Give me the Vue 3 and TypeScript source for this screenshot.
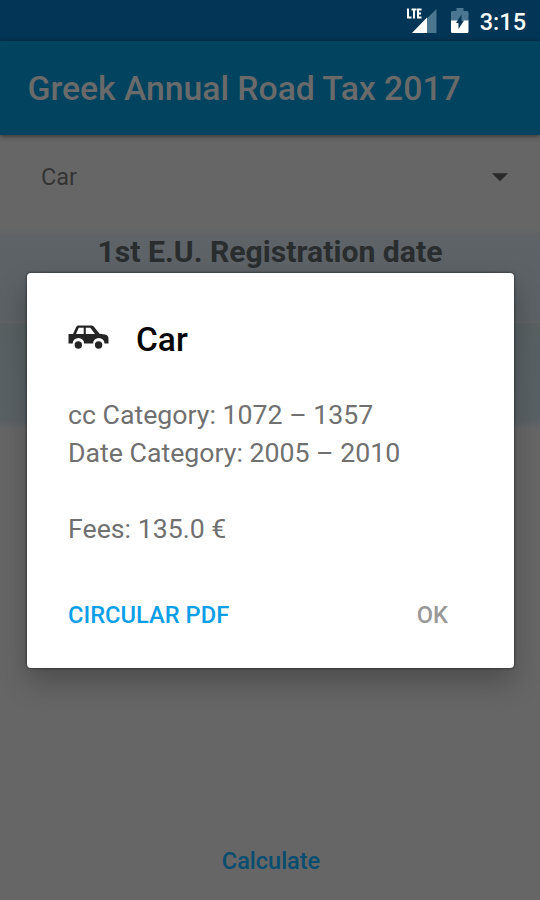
<script setup lang="ts">
interface TaxResult {
  vehicle: string
  ccRange: string
  dateRange: string
  fees: string
}

const result: TaxResult = {
  vehicle: 'Car',
  ccRange: '1072 – 1357',
  dateRange: '2005 – 2010',
  fees: '135.0 €',
}
</script>

<template>
  <div class="screen">
    <header class="status-bar">
      <svg class="signal" viewBox="0 0 32 26" width="32" height="26">
        <path d="M30.500 1V25H6Z" fill="#4b7790" />
        <path d="M21 9.500V25H6Z" fill="#fff" />
        <path d="M2 .5v9h3.500M5.500 1.500h5M8 1.500v9M15.500 1.500h-3.500v8h3.500M12 5.500h3" fill="none" stroke="#fff" stroke-width="2" />
      </svg>
      <svg class="battery" viewBox="0 0 18 26" width="18" height="26">
        <path d="M5.500 0h7v3H16q1.500 0 1.500 1.500V13H0V4.500Q0 3 1.500 3h4z" fill="#4b7790" />
        <path d="M0 12.500h17.500V23.500q0 1.500-1.500 1.500H1.500Q0 25 0 23.500z" fill="#fff" />
        <path d="M10.500 6.500v6H13L7.500 21v-6H5z" fill="#043555" />
      </svg>
      <span class="clock">3:15</span>
    </header>

    <div class="toolbar"><h1>Greek Annual Road Tax 2017</h1></div>

    <main class="content">
      <div class="spinner">
        <span>{{ result.vehicle }}</span>
        <svg viewBox="0 0 16 9" width="16" height="9"><path d="M0 .3h16L8 8.300z" fill="#292929" /></svg>
      </div>
      <section class="registration"><h2>1st E.U. Registration date</h2><div class="rule"></div></section>
      <button class="calculate" type="button">Calculate</button>
    </main>

    <div class="dialog" role="dialog">
      <div class="dialog-title">
        <svg viewBox="0 0 41 25" width="41" height="25">
          <path fill="#252525" fill-rule="evenodd" d="M10.500 .5H23.500q1.500 0 2.500 1.200L31.500 8.800l5.500 .8q3.500 .7 3.500 4.200v4.800h-4a5.700 5.700 0 0 0-11.400 0h-9a5.700 5.700 0 0 0-11.400 0H.5V9h4.500L8.300 1.800Q9 .5 10.500 .5zM10.800 2.800 8 9h7.700V2.800zM17.800 2.800V9h9.200L22.300 2.800z" />
          <circle cx="10.300" cy="20" r="3.700" fill="#252525" />
          <circle cx="30.600" cy="20" r="3.700" fill="#252525" />
        </svg>
        <h2>{{ result.vehicle }}</h2>
      </div>
      <div class="details">
        <p class="cc">cc Category: {{ result.ccRange }}</p>
        <p class="date">Date Category: {{ result.dateRange }}</p>
        <p class="fees">Fees: {{ result.fees }}</p>
      </div>
      <div class="actions">
        <button class="pdf" type="button">CIRCULAR PDF</button>
        <button class="ok" type="button">OK</button>
      </div>
    </div>
  </div>
</template>

<style>
body { margin: 0; }
</style>

<style scoped>
* { box-sizing: border-box; }
h1, h2, p { margin: 0; }
button { border: 0; padding: 0; background: none; font: inherit; }
.screen {
  position: relative;
  display: flex;
  flex-direction: column;
  width: 540px;
  height: 900px;
  overflow: hidden;
  background: #666;
  font-family: Roboto, "Liberation Sans", sans-serif;
}
.status-bar {
  display: flex;
  align-items: center;
  justify-content: flex-end;
  height: 41px;
  padding: 1px 14px 0 0;
  background: #033556;
}
.signal { margin-right: 13px; }
.battery { margin-right: 11px; }
.clock { padding-top: 1px; color: #fff; font-size: 23.500px; font-weight: 500; line-height: 40px; }
.toolbar {
  display: flex;
  align-items: center;
  height: 94px;
  padding: 1px 0 0 27.500px;
  background: #02435f;
  box-shadow: 0 1px 5px rgba(0, 0, 0, .55);
  z-index: 1;
}
.toolbar h1 { color: #6a6a6a; font-size: 33.750px; font-weight: 500; letter-spacing: -.04px; line-height: 40px; white-space: nowrap; }
.content { display: flex; flex: 1; flex-direction: column; }
.spinner {
  display: flex;
  align-items: center;
  justify-content: space-between;
  height: 94px;
  padding: 0 32px 10px 41px;
  color: #343434;
  font-size: 23.500px;
}
.registration {
  height: 200px;
  background: linear-gradient(#666, #5e6368 4%, #5b6164 46%, #586062 48%, #5a6165 96%, #666);
  text-align: center;
}
.registration h2 { padding-top: 3px; color: #292d2e; font-size: 30.200px; font-weight: 700; line-height: 40px; white-space: nowrap; }
.rule { height: 2px; margin-top: 49px; background: #606364; }
.calculate {
  align-self: center;
  margin-top: auto;
  margin-bottom: 23px;
  padding-left: 2px;
  color: #064d70;
  font-size: 23.500px;
  font-weight: 500;
  line-height: 32px;
}
.dialog {
  position: absolute;
  z-index: 2;
  top: 273px;
  left: 27px;
  display: flex;
  flex-direction: column;
  width: 487px;
  height: 395px;
  padding: 44px 66px 0 41px;
  border-radius: 4px;
  background: #fff;
  box-shadow: 0 0 3px rgba(0, 0, 0, .65), 0 14px 28px rgba(0, 0, 0, .25);
}
.dialog-title { display: flex; align-items: center; gap: 27px; height: 44px; }
.dialog-title svg { margin-bottom: 3px; }
.dialog-title h2 { padding-top: 1px; color: #050505; font-size: 33.500px; font-weight: 500; line-height: 44px; }
.details { margin-top: 34.500px; color: #707070; font-size: 26.700px; line-height: 38.300px; white-space: nowrap; }
.details p { width: max-content; }
.fees { margin-top: 38px; }
.actions { display: flex; justify-content: space-between; margin-top: 49.500px; font-size: 23.700px; font-weight: 500; line-height: 34px; }
.pdf { color: #0c9fe8; }
.ok { color: #999; }
</style>
